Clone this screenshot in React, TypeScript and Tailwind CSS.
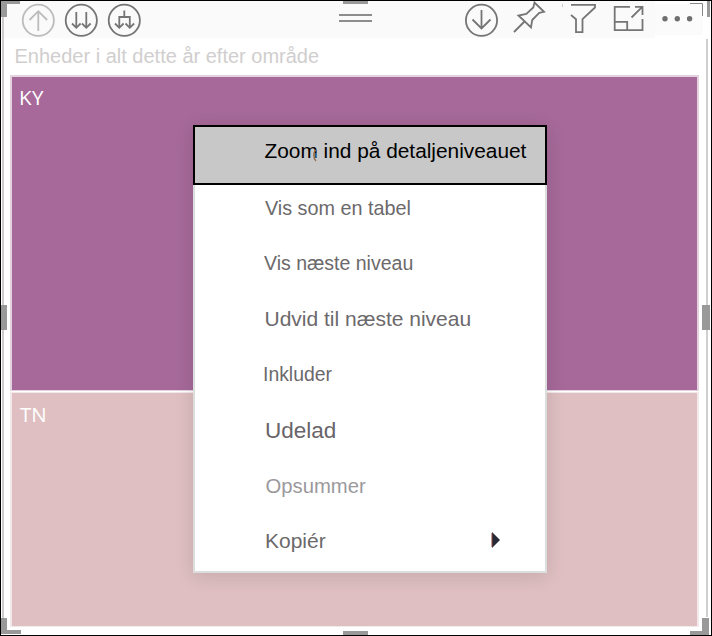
import React from 'react';

const items = [
  { label: 'Vis som en tabel', style: 'pl-[70px] text-[19.8px] text-[#6b696b]' },
  { label: 'Vis næste niveau', style: 'mt-[9px] pl-[69px] text-[19.5px] text-[#6b696b]' },
  { label: 'Udvid til næste niveau', style: 'mt-[10px] pl-[69.5px] text-[21px] text-[#6b696b]' },
  { label: 'Inkluder', style: 'mt-[9px] pl-[68px] text-[19.4px] text-[#6b696b]' },
  { label: 'Udelad', style: 'mt-[11px] pl-[70px] text-[22.5px] text-[#696469]' },
  { label: 'Opsummer', style: 'mt-[9px] pl-[70.5px] text-[20.3px] text-[#9b999c]' },
  { label: 'Kopiér', style: 'mt-[9px] pl-[70px] text-[21px] text-[#6b696b]', arrow: true },
];

function Toolbar() {
  return (
    <header className="h-[37px] w-full shrink-0 bg-[#fafafa]">
      <svg width="710" height="37" viewBox="1 1 710 37" fill="none" stroke="#757575" strokeWidth="1.8">
        <path d="M655 1h56v37h-56z" fill="#fff" stroke="none" />
        <path d="M655 4h48v31h-48z" fill="#fbfbfb" stroke="none" />
        <g stroke="#bcbcbc">
          <circle cx="38.3" cy="20.3" r="15.6" />
          <path d="M38.3 31V11.5M29.5 20l8.8-8.8 8.8 8.8" />
        </g>
        <circle cx="81.3" cy="20.3" r="15.6" />
        <path d="M76.3 12v16M72 23.5l4.3 4.3 4.3-4.3M86.3 12v16M82 23.5l4.3 4.3 4.3-4.3" />
        <circle cx="124.3" cy="20.3" r="15.6" />
        <path d="M124.3 10.5v6.5M119.3 28V17h10.5v11M115 23.5l4.3 4.3 4.3-4.3M125.5 23.5l4.3 4.3 4.3-4.3" />
        <path d="M339 15h33M339 21h33" stroke="#8d8d8d" strokeWidth="2" />
        <circle cx="481.5" cy="20.3" r="15.6" />
        <path d="M481.5 10v18.5M472.5 19.5l9 9 9-9" />
        <path d="M514 32l10.5-10.5M518.5 15.5l12.5 12 1.2-7.5 7-7.2 4.8-1-9.5-9.3-1.2 5-7 6.5z" />
        <path d="M562.5 4v3" stroke="#c8c8c8" strokeWidth="1" />
        <path d="M571 4.8h24v2.7l-12.5 11.7v13h-6.5V19.2L571 15" />
        <path d="M630 6.8h-15.3v23.4h27.8V19M614.7 21.8h12.5v8.4M631.5 17.5l10.5-10.3M635 6.8h7.5V15" />
        <g fill="#6f6f6f" stroke="none">
          <circle cx="665" cy="18.8" r="2.7" />
          <circle cx="677.3" cy="18.8" r="2.7" />
          <circle cx="689.6" cy="18.8" r="2.7" />
        </g>
      </svg>
    </header>
  );
}

function FrameHandles() {
  return (
    <svg className="pointer-events-none absolute inset-0" width="712" height="636" viewBox="0 0 712 636">
      <path d="M2 17h2v602H2z" fill="#d0cbcb" />
      <path d="M706 39h2v578h-2z" fill="#cfcfcf" />
      <g fill="#999">
        <path d="M1 1h19v3H7v13H1zM343 1h25v3h-25zM1 618h6v12h14v4H1zM343 631h25v4h-25zM702 618h7v17h-19v-4h12z" />
        <path d="M1 305h6v25H1zM702 305h8v25h-8zM707 1h3v16h-3z" />
      </g>
      <path d="M690 3.5h12.5V16" fill="none" stroke="#888" />
      <path d="M0 0h712v636H0zM1 1v634h710V1z" fill="#000" fillRule="evenodd" />
    </svg>
  );
}

function ContextMenu() {
  return (
    <div className="absolute left-[193px] top-[125px] flex h-[448px] w-[354px] flex-col bg-white shadow-[0_3px_18px_rgba(0,0,0,0.12)]">
      <div className="h-[60px] shrink-0 border-2 border-black bg-[#c8c8c8] pl-[69.5px] text-[20.85px] leading-[47px] text-black">
        Zoom ind på detaljeniveauet
      </div>
      <div className="flex-1 border-2 border-t-0 border-[#dcdede]">
        {items.map((item) => (
          <div key={item.label} className={`flex h-[46px] items-center justify-between pr-[44px] leading-[46px] ${item.style}`}>
            <span>{item.label}</span>
            {item.arrow && (
              <svg width="10" height="16" viewBox="0 0 10 16" className="relative -top-px">
                <path d="M1 0v16l8-8z" fill="#272b38" />
                <path d="M1 1v14" stroke="#8b4034" />
              </svg>
            )}
          </div>
        ))}
      </div>
      <svg className="absolute left-[119px] top-[24px]" width="6" height="13" viewBox="0 0 6 13" fill="none">
        <path d="M4 1C1 3 1 9 4 12" stroke="#946b4a" strokeWidth="1.3" />
        <path d="M4 4v5" stroke="#3686bd" strokeWidth="1.3" />
      </svg>
    </div>
  );
}

export default function App() {
  return (
    <main className="relative flex h-[636px] w-[712px] flex-col overflow-hidden bg-white p-px font-['Liberation_Sans',sans-serif] whitespace-nowrap">
      <Toolbar />
      <h1 className="h-[37px] shrink-0 pl-[13.5px] text-[20px] leading-[36px] text-[#d0cece]">
        Enheder i alt dette år efter område
      </h1>
      <section className="ml-[9px] flex w-[689px] flex-col font-['Open_Sans',sans-serif] text-[20.5px] leading-[28px] text-white">
        <div className="h-[316px] border-2 border-b-[1px] border-[#e3d3df] bg-[#a66999] pl-[7px] pt-[6px] tracking-[0.5px]">KY</div>
        <div className="mt-px h-[235px] border-2 border-t-[1px] border-b-[1px] border-[#f4e9ea] bg-[#dfbfc1] pl-[8px] pt-[7px]">TN</div>
      </section>
      <FrameHandles />
      <ContextMenu />
    </main>
  );
}
